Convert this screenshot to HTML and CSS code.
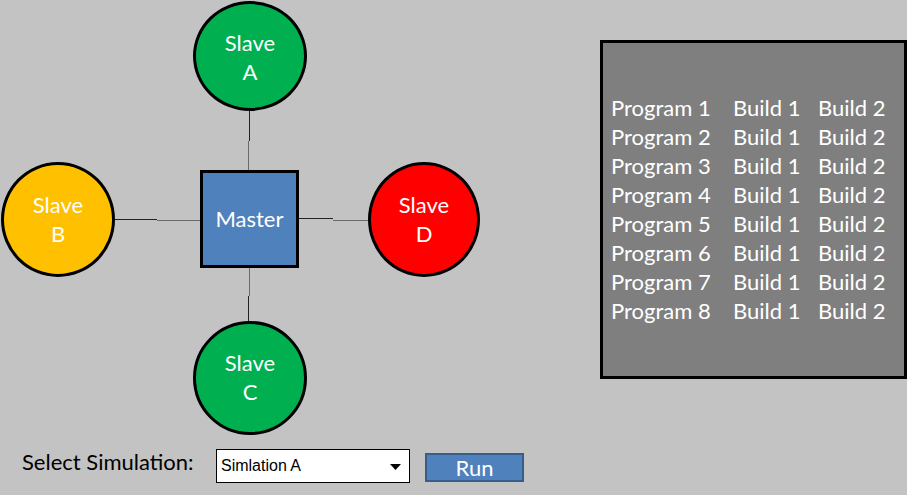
FILE: index.html
```html
<!DOCTYPE html>
<html>
<head>
<meta charset="utf-8">
<link rel="stylesheet" href="styles.css">
</head>
<body>
<div class="screen">
  <div class="top">
    <div class="diagram">
      <svg class="wires" width="600" height="446" viewBox="0 0 600 446">
        <line x1="249.5" y1="110" x2="249.5" y2="141" stroke="#222" stroke-width="1"/>
        <line x1="248.5" y1="141" x2="248.5" y2="171" stroke="#6a6a6a" stroke-width="1"/>
        <line x1="249.5" y1="267" x2="249.5" y2="296" stroke="#6a6a6a" stroke-width="1"/>
        <line x1="248.5" y1="296" x2="248.5" y2="322" stroke="#222" stroke-width="1"/>
        <line x1="113" y1="219.5" x2="157" y2="219.5" stroke="#222" stroke-width="1"/>
        <line x1="157" y1="220.5" x2="201" y2="220.5" stroke="#6a6a6a" stroke-width="1"/>
        <line x1="297" y1="218.5" x2="333" y2="218.5" stroke="#222" stroke-width="1"/>
        <line x1="333" y1="220.5" x2="369" y2="220.5" stroke="#6a6a6a" stroke-width="1"/>
      </svg>
      <div class="node slave slave-a green"><span>Slave</span><span>A</span></div>
      <div class="node slave slave-b yellow"><span>Slave</span><span>B</span></div>
      <div class="node master"><span>Master</span></div>
      <div class="node slave slave-d red"><span>Slave</span><span>D</span></div>
      <div class="node slave slave-c green"><span>Slave</span><span>C</span></div>
    </div>
    <div class="panel">
      <div class="programs">
        <span>Program 1</span><span>Build 1</span><span>Build 2</span>
        <span>Program 2</span><span>Build 1</span><span>Build 2</span>
        <span>Program 3</span><span>Build 1</span><span>Build 2</span>
        <span>Program 4</span><span>Build 1</span><span>Build 2</span>
        <span>Program 5</span><span>Build 1</span><span>Build 2</span>
        <span>Program 6</span><span>Build 1</span><span>Build 2</span>
        <span>Program 7</span><span>Build 1</span><span>Build 2</span>
        <span>Program 8</span><span>Build 1</span><span>Build 2</span>
      </div>
    </div>
  </div>
  <div class="controls">
    <span class="label">Select Simulation:</span>
    <div class="select">
      <span class="select-text">Simlation A</span>
      <svg class="caret" width="11" height="6" viewBox="0 0 11 6"><path d="M0 0H11L5.5 6Z" fill="#000"/></svg>
    </div>
    <button class="run">Run</button>
  </div>
</div>
</body>
</html>
```

FILE: styles.css
```css
html, body {
  margin: 0;
  padding: 0;
}
body {
  background: #c3c3c3;
  font-family: Lato, "Open Sans", sans-serif;
  width: 907px;
  height: 495px;
  overflow: hidden;
}
.screen {
  display: flex;
  flex-direction: column;
  width: 907px;
  height: 495px;
}
.top {
  display: flex;
  height: 446px;
}
.diagram {
  position: relative;
  width: 600px;
  height: 446px;
  flex: none;
}
.wires {
  position: absolute;
  left: 0;
  top: 0;
}
.node {
  position: absolute;
  box-sizing: border-box;
  border: 3px solid #000;
  display: flex;
  flex-direction: column;
  align-items: center;
  justify-content: center;
  color: #fff;
  font-size: 22px;
  line-height: 29px;
}
.slave {
  border-radius: 50%;
}
.green { background: #00b050; }
.yellow { background: #ffc000; }
.red { background: #ff0000; }
.slave-a { left: 193px; top: 1px; width: 114px; height: 110px; padding-top: 2px; }
.slave-b { left: 1px; top: 162px; width: 114px; height: 115px; padding-bottom: 2px; }
.slave-d { left: 368px; top: 162px; width: 112px; height: 115px; padding-bottom: 2px; }
.slave-c { left: 193px; top: 321px; width: 114px; height: 114px; padding-bottom: 2px; }
.master {
  left: 200px;
  top: 170px;
  width: 99px;
  height: 98px;
  background: #4f81bd;
  padding-bottom: 2px;
}
.panel {
  margin-top: 40px;
  width: 307px;
  height: 339px;
  box-sizing: border-box;
  border: 3px solid #000;
  background: #7f7f7f;
  padding: 50px 0 0 8px;
  color: #fff;
  font-size: 22px;
  line-height: 29px;
}
.programs {
  display: grid;
  grid-template-columns: 122px 85px auto;
}
.controls {
  display: flex;
  align-items: flex-start;
  height: 49px;
  box-sizing: border-box;
  padding: 4px 0 0 22px;
}
.label {
  font-size: 22px;
  line-height: 29px;
  color: #000;
  width: 194px;
  margin-top: -3px;
}
.select {
  box-sizing: border-box;
  width: 194px;
  height: 34px;
  border: 1px solid #000;
  background: #fff;
  display: flex;
  align-items: center;
  justify-content: space-between;
  padding: 0 8px 0 4px;
  margin-top: -1px;
}
.select-text {
  font-family: "Liberation Sans", Arial, sans-serif;
  font-size: 16px;
  color: #000;
}
.caret {
  display: block;
  margin-top: 1px;
}
.run {
  margin-left: 15px;
  margin-top: 3px;
  box-sizing: border-box;
  width: 99px;
  height: 29px;
  border: 2px solid #385d8a;
  background: #4f81bd;
  color: #fff;
  font-family: Lato, sans-serif;
  font-size: 22px;
  line-height: 23px;
  padding: 0;
}
```
